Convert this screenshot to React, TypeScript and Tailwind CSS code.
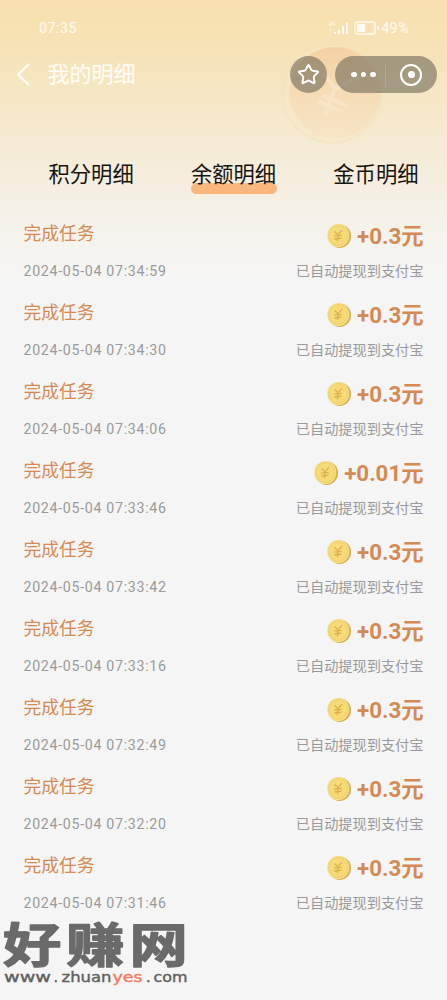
import { Star } from "lucide-react";

interface IRecord {
  time: string;
  amount: string;
}

const tabs = ["积分明细", "余额明细", "金币明细"];

const records: IRecord[] = [
  { time: "2024-05-04 07:34:59", amount: "+0.3元" },
  { time: "2024-05-04 07:34:30", amount: "+0.3元" },
  { time: "2024-05-04 07:34:06", amount: "+0.3元" },
  { time: "2024-05-04 07:33:46", amount: "+0.01元" },
  { time: "2024-05-04 07:33:42", amount: "+0.3元" },
  { time: "2024-05-04 07:33:16", amount: "+0.3元" },
  { time: "2024-05-04 07:32:49", amount: "+0.3元" },
  { time: "2024-05-04 07:32:20", amount: "+0.3元" },
  { time: "2024-05-04 07:31:46", amount: "+0.3元" },
];

const CoinIcon = () => (
  <svg width="26" height="26" viewBox="0 0 26 26" className="shrink-0">
    <defs>
      <linearGradient id="coinFace" x1="0" y1="0" x2="1" y2="1">
        <stop offset="0" stopColor="#f7dc7c" />
        <stop offset="1" stopColor="#f8d873" />
      </linearGradient>
    </defs>
    <ellipse cx="13.6" cy="13.2" rx="11.4" ry="11.8" fill="#d8b04c" />
    <ellipse cx="12.2" cy="12.5" rx="11" ry="11.6" fill="#f6df8c" />
    <ellipse cx="12.2" cy="12.5" rx="9.3" ry="9.9" fill="url(#coinFace)" stroke="#ecc961" strokeWidth="0.8" />
    <path d="M8.5 8.5l3.6 3.2 4-4.6M12.1 11.7l-.6 6.6M8.3 13.2l7.4-.8M8.3 16l7.2-.8" fill="none" stroke="#dcb04c" strokeWidth="1.3" />
  </svg>
);

// large faded coin behind the header buttons
const HeaderCoin = () => (
  <svg className="absolute left-[278px] top-[42px]" width="110" height="106" viewBox="0 0 110 106">
    <defs>
      <linearGradient id="bigCoin" x1="0" y1="0" x2="0" y2="1">
        <stop offset="0" stopColor="#f4cb98" stopOpacity="0.75" />
        <stop offset="1" stopColor="#f6dcba" stopOpacity="0.35" />
      </linearGradient>
    </defs>
    <circle cx="54" cy="52" r="49" fill="#f7e7c6" fillOpacity="0.5" stroke="#f4e2bb" strokeOpacity="0.5" strokeWidth="2" />
    <circle cx="57" cy="50.5" r="45.5" fill="url(#bigCoin)" />
    <path d="M46 31l11 16 24-12M57 46L47 75M44 53l25 11M39 59l25 11" fill="none" stroke="#f8e6c9" strokeOpacity="0.8" strokeWidth="4.5" />
  </svg>
);

const StatusBar = () => (
  <div className="h-14 pl-[39px] pr-[38px] flex items-center justify-between text-white/85 text-[14px]">
    <span className="tracking-[0.6px]">07:35</span>
    <div className="flex items-center">
      <svg width="22" height="14" viewBox="0 0 22 14" fill="currentColor" className="mr-1">
        <path d="M3 1L1 4h3M3 1v4M7 1H5v3h2V3" fill="none" stroke="currentColor" strokeWidth="0.7" />
        <path d="M2 8h1v2H2zM6 11h2v2H6zM10 9h2v4h-2zM14 5h2v8h-2zM18 2h2v11h-2z" />
      </svg>
      <svg width="26" height="14" viewBox="0 0 26 14" className="mr-[2px]">
        <rect x="1" y="1" width="20" height="12" rx="2.5" fill="none" stroke="currentColor" strokeWidth="1.4" />
        <rect x="3" y="3" width="8" height="8" fill="currentColor" />
        <path d="M24 5v4" stroke="currentColor" strokeWidth="1.6" />
      </svg>
      <span className="tracking-[0.5px]">49%</span>
    </div>
  </div>
);

const TitleBar = () => (
  <div className="h-[37px] pl-[7px] pr-[10.5px] flex items-center">
    <svg width="33" height="33" viewBox="0 0 33 33" className="text-white/90">
      <path d="M22 6L11 16.5 22 27" fill="none" stroke="currentColor" strokeWidth="2" />
    </svg>
    <h1 className="ml-[7.5px] text-[22px] leading-[36px] text-white/90">我的明细</h1>
    <button className="ml-auto size-[37px] rounded-full bg-[#6f6958]/60 flex items-center justify-center">
      <Star size={23} strokeWidth={2} className="text-white" />
    </button>
    <div className="ml-2 w-[101.5px] h-[37px] rounded-full bg-[#6f6958]/60 flex items-center">
      <div className="w-[50px] pl-4 flex gap-1">
        <span className="size-[5.5px] rounded-full bg-white" />
        <span className="size-[5.5px] rounded-full bg-white" />
        <span className="size-[5.5px] rounded-full bg-white" />
      </div>
      <span className="w-px h-6 bg-white/15" />
      <span className="ml-[14px] size-[22px] rounded-full border-[2.5px] border-white flex items-center justify-center">
        <span className="size-[7px] rounded-full bg-white" />
      </span>
    </div>
  </div>
);

const SiteMark = () => (
  <svg className="absolute left-0 top-[900px]" width="200" height="100" viewBox="0 0 200 100">
    <text
      transform="translate(3 62) scale(1.24 1)"
      x="0 51 102"
      fontSize="47"
      fontWeight="700"
      fill="#6a6a6a"
      stroke="#6a6a6a"
      strokeWidth="1.4"
      strokeLinejoin="round"
      className="font-['Liberation_Sans','Noto_Sans_CJK_SC',sans-serif]"
    >
      好赚网
    </text>
    <text
      y="81.5"
      fontSize="14.5"
      fill="#606060"
      stroke="#606060"
      strokeWidth="0.4"
      className="font-['DejaVu_Sans',sans-serif]"
    >
      <tspan x="4" textLength="47" lengthAdjust="spacingAndGlyphs">www</tspan>
      <tspan x="53.5">.</tspan>
      <tspan x="61.5" textLength="50" lengthAdjust="spacingAndGlyphs">zhuan</tspan>
      <tspan x="112.5" textLength="30" lengthAdjust="spacingAndGlyphs" fill="#f37b5c" stroke="#f37b5c">yes</tspan>
      <tspan x="146">.</tspan>
      <tspan x="153.5" textLength="34" lengthAdjust="spacingAndGlyphs">com</tspan>
    </text>
  </svg>
);

const App = () => {
  const activeTab = "余额明细";

  return (
    <div className="relative w-[447px] h-[1000px] overflow-hidden bg-[#f5f5f5] bg-[linear-gradient(180deg,#f8e0ae_0px,#f6e3b6_50px,#f5e6c3_90px,#f5ead2_140px,#f5efe2_190px,#f5f3ed_235px,#f5f5f5_285px)] font-[Roboto,'Noto_Sans_CJK_SC',sans-serif]">
      <HeaderCoin />
      <div className="relative">
        <StatusBar />
        <TitleBar />
        <div className="mt-[63px] h-[38px] pl-[48.5px] pr-[28.5px] flex justify-between">
          {tabs.map((tab) => (
            <div key={tab} className="relative h-[38px] text-[21.3px] leading-[38px] text-[#17130d]">
              {tab === activeTab && (
                <span className="absolute left-0 -right-px top-[27px] h-[10.5px] rounded-full bg-[#f8b77d]" />
              )}
              <span className="relative">{tab}</span>
            </div>
          ))}
        </div>
        <div className="mt-5 px-[23.5px]">
          {records.map((item) => (
            <div key={item.time} className="h-[79px]">
              <div className="h-[46px] flex items-center justify-between text-[#d58a53]">
                <span className="-mt-[5px] text-[17.8px]">完成任务</span>
                <div className="-mt-[2px] flex items-center">
                  <CoinIcon />
                  <span className="ml-[5px] text-[22.3px] leading-[30px] font-bold">{item.amount}</span>
                </div>
              </div>
              <div className="h-6 flex items-center justify-between text-[14.2px] text-[#9a9a9a]">
                <span className="tracking-[0.7px]">{item.time}</span>
                <span>已自动提现到支付宝</span>
              </div>
            </div>
          ))}
        </div>
      </div>
      <SiteMark />
    </div>
  );
};

export default App;
